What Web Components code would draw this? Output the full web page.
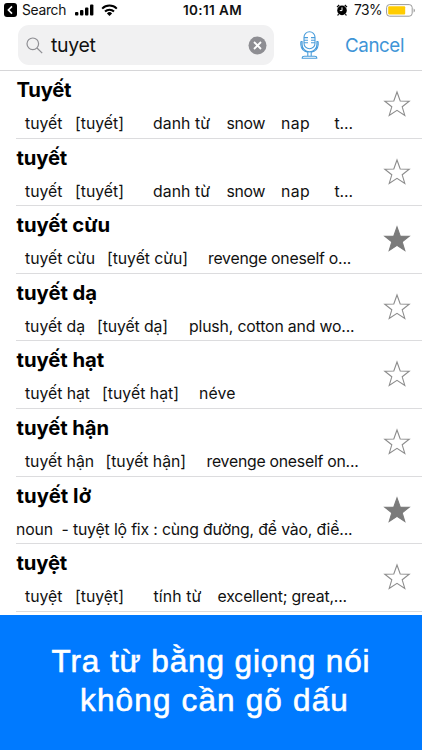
<!DOCTYPE html>
<html lang="vi">
<head>
<meta charset="UTF-8">
<meta name="viewport" content="width=device-width, initial-scale=1">
<title>Từ điển</title>
<style>
  body {
    margin: 0;
    background: white;
    color: #111;
    font-family: Inter, "Noto Sans", sans-serif;
  }
</style>
</head>
<body>
<dictionary-app></dictionary-app>
<script>
// One run of text, tracked so that it takes up the given width
class FitText extends HTMLElement {
  constructor() {
    super();
    this.attachShadow({ mode: 'open' });
    this.shadowRoot.innerHTML = `
      <style>
        :host { display: block; flex: none; }
        span { display: inline-block; white-space: pre; }
      </style>
      <span><slot></slot></span>
    `;
  }

  connectedCallback() {
    const width = Number(this.getAttribute('width'));
    const span = this.shadowRoot.querySelector('span');
    const natural = span.getBoundingClientRect().width;
    const spacing = (width - natural) / this.textContent.length;
    span.style.letterSpacing = `${spacing.toFixed(3)}px`;
    this.style.width = `${width}px`;
  }
}

class StatusBar extends HTMLElement {
  constructor() {
    super();
    this.attachShadow({ mode: 'open' });
    this.shadowRoot.innerHTML = `
      <style>
        :host {
          display: grid;
          grid-template-columns: 183px 60px 1fr;
          height: 20px;
          line-height: 20px;
          font-size: 13.8px;
          color: #111;
        }
        div { display: flex; align-items: center; }
        svg { display: block; flex: none; }
        .left { padding-left: 4px; }
        .left fit-text { margin: 0 9px 0 5px; }
        .time { font-weight: 600; font-size: 13.5px; }
        .right { padding-left: 93px; }
        .right fit-text { margin: 0 4px 0 6px; }
      </style>
      <div class="left">
        <svg width="13" height="14" viewBox="0 0 13 14">
          <rect width="13" height="14" rx="3" fill="#000"/>
          <path d="M8 3.4 4.4 7 8 10.6" fill="none" stroke="#fff" stroke-width="1.6"/>
        </svg>
        <fit-text width="44">Search</fit-text>
        <svg width="19" height="12" viewBox="0 0 19 12">
          <rect x="0" y="8" width="3.4" height="3.6" rx="1"/>
          <rect x="5" y="6" width="3.4" height="5.6" rx="1"/>
          <rect x="10" y="3.6" width="3.4" height="8" rx="1"/>
          <rect x="15" y="0.4" width="3.4" height="11.2" rx="1"/>
        </svg>
        <svg width="17" height="12" viewBox="0 0 17 12" style="margin-left:7px">
          <g fill="none" stroke="#000" stroke-width="2">
            <path d="M1.2 4.6a10.4 10.4 0 0 1 14.6 0"/>
            <path d="M4 7.5a6.4 6.4 0 0 1 9 0"/>
          </g>
          <path d="M8.5 12 5.9 9.4a3.7 3.7 0 0 1 5.2 0z"/>
        </svg>
      </div>
      <div class="time"><fit-text width="59">10:11 AM</fit-text></div>
      <div class="right">
        <svg width="12" height="12" viewBox="0 0 12 12">
          <circle cx="6" cy="6.4" r="4.8"/>
          <path d="M1 3.2 3.2 1M11 3.2 8.8 1M2.6 10.2l-1 1.3M9.4 10.2l1 1.3" stroke="#000" stroke-width="1.2"/>
          <path d="M6 3.4v3.2H3.8" fill="none" stroke="#fff" stroke-width="1"/>
        </svg>
        <fit-text width="28">73%</fit-text>
        <svg width="30" height="13" viewBox="0 0 30 13">
          <rect x=".6" y=".6" width="25.6" height="11.6" rx="3" fill="#fff" stroke="#999" stroke-width="1"/>
          <rect x="2.2" y="2.2" width="17" height="8.4" rx="1" fill="#fc0"/>
          <path d="M27.6 4.4a2.2 2.2 0 0 1 0 4z" fill="#999"/>
        </svg>
      </div>
    `;
  }
}

class SearchHeader extends HTMLElement {
  constructor() {
    super();
    this.attachShadow({ mode: 'open' });
    this.shadowRoot.innerHTML = `
      <style>
        :host {
          display: flex;
          align-items: center;
          box-sizing: border-box;
          height: 51px;
          border-bottom: 1px solid #d6d6d8;
          padding-left: 18px;
        }
        svg { display: block; flex: none; }
        .field {
          display: flex;
          align-items: center;
          box-sizing: border-box;
          width: 256px;
          height: 40px;
          padding: 0 7px 0 8px;
          border-radius: 11px;
          background: #f1f1f2;
          font-size: 19.5px;
        }
        .field fit-text { margin: 0 auto 0 8px; }
        .mic { margin: 0 26px 0 26px; }
        .cancel { color: #3f95d7; font-size: 18.8px; }
      </style>
      <div class="field">
        <svg width="17" height="17" viewBox="0 0 17 17" fill="none" stroke="#8e8e93" stroke-width="1.2">
          <circle cx="6.8" cy="6.8" r="5.8"/>
          <path d="M11 11l5.2 5.2"/>
        </svg>
        <fit-text width="44.5">${this.getAttribute('query')}</fit-text>
        <svg width="19" height="19" viewBox="0 0 19 19">
          <circle cx="9.5" cy="9.5" r="9" fill="#8e8e93"/>
          <path d="M6 6l7 7M13 6l-7 7" stroke="#fff" stroke-width="1.8"/>
        </svg>
      </div>
      <svg class="mic" width="19" height="28" viewBox="0 0 19 28" fill="none" stroke="#4a9ddb" stroke-width="1.1">
        <rect x="4" y=".8" width="11" height="17" rx="5.5"/>
        <path d="M4 6.6h4M4 9.2h4M4 11.8h4M15 6.6h-4M15 9.2h-4M15 11.8h-4"/>
        <path d="M2.1 10.5v3a7.4 7.4 0 0 0 14.8 0v-3M.8 10.5h1.8M16.4 10.5h1.8M.8 10.5v3.2a8.6 8.6 0 0 0 7 7.6v4M18.2 10.5v3.2a8.6 8.6 0 0 1-7 7.6v4M2.2 27.2c0-1.4 1-1.9 2.2-1.9h10.2c1.2 0 2.2.5 2.2 1.9z"/>
      </svg>
      <fit-text class="cancel" width="59">Cancel</fit-text>
    `;
  }
}

class StarButton extends HTMLElement {
  constructor() {
    super();
    this.attachShadow({ mode: 'open' });
    this.shadowRoot.innerHTML = `
      <style>
        :host { display: block; width: 28px; height: 27px; }
        svg { display: block; }
        path { fill: none; stroke: #8c8c8c; stroke-width: 1.1; }
        :host([filled]) path { fill: #7b7b7b; stroke: #7b7b7b; }
      </style>
      <svg width="28" height="27" viewBox="0 0 28 27">
        <path d="M14 2l3.2 9 9 .2-7 5.6 2.6 8.6-7.8-5-7.8 5 2.6-8.6-7-5.6 9-.2z"/>
      </svg>
    `;
  }
}

class WordRow extends HTMLElement {
  constructor() {
    super();
    this.attachShadow({ mode: 'open' });
    this.shadowRoot.innerHTML = `
      <style>
        :host {
          display: flex;
          justify-content: space-between;
          box-sizing: border-box;
          height: 67.6px;
          margin-left: 16px;
          padding-right: 11px;
          border-bottom: 1px solid #dcdcde;
        }
        .title {
          height: 38px;
          padding-left: 0.6px;
          line-height: 38px;
          color: #000;
          font-size: 20.3px;
          font-weight: 700;
        }
        .meaning {
          display: flex;
          height: 28px;
          line-height: 30px;
          font-size: 15.8px;
        }
        star-button { flex: none; margin-top: 19px; }
      </style>
      <div>
        <div class="title"></div>
        <div class="meaning"></div>
      </div>
      <star-button></star-button>
    `;
  }

  set word(word) {
    const root = this.shadowRoot;
    const [title, width] = word.title;
    root.querySelector('.title').innerHTML = `<fit-text width="${width}">${title}</fit-text>`;

    let x = 16;
    root.querySelector('.meaning').innerHTML = word.parts.map(([text, start, end]) => {
      const gap = start - x;
      x = end;
      return `<fit-text width="${end - start}" style="margin-left:${gap}px">${text}</fit-text>`;
    }).join('');

    root.querySelector('star-button').toggleAttribute('filled', Boolean(word.saved));
  }
}

class PromoBanner extends HTMLElement {
  constructor() {
    super();
    this.attachShadow({ mode: 'open' });
    this.shadowRoot.innerHTML = `
      <style>
        :host {
          display: flex;
          flex-direction: column;
          align-items: center;
          box-sizing: border-box;
          height: 135.4px;
          padding-top: 27.4px;
          background: #007aff;
          color: white;
          font: 31.5px/39px "Liberation Sans", Arial, sans-serif;
          -webkit-text-stroke: 0.6px white;
        }
        .second { margin-left: 7px; }
      </style>
      <fit-text width="319">Tra từ bằng giọng nói</fit-text>
      <fit-text class="second" width="269">không cần gõ dấu</fit-text>
    `;
  }
}

// title: [text, width], parts: [text, start, end]
const words = [
  { title: ['Tuyết', 54.5], parts: [['tuyết', 25, 62.5], ['[tuyết]', 75, 124], ['danh từ', 153, 210], ['snow', 226.5, 265], ['nap', 281, 310], ['t...', 334.5, 353]] },
  { title: ['tuyết', 50.5], parts: [['tuyết', 25, 62.5], ['[tuyết]', 75, 124], ['danh từ', 153, 210], ['snow', 226.5, 265], ['nap', 281, 310], ['t...', 334.5, 353]] },
  { title: ['tuyết cừu', 93.5], saved: true, parts: [['tuyết cừu', 25, 95], ['[tuyết cừu]', 107, 188], ['revenge oneself o...', 208, 351]] },
  { title: ['tuyết dạ', 80.5], parts: [['tuyết dạ', 25, 85], ['[tuyết dạ]', 97, 168], ['plush, cotton and wo...', 189, 354.5]] },
  { title: ['tuyết hạt', 87.5], parts: [['tuyết hạt', 25, 90], ['[tuyết hạt]', 102, 179], ['néve', 199, 235.5]] },
  { title: ['tuyết hận', 92.5], parts: [['tuyết hận', 25, 94], ['[tuyết hận]', 105.5, 186], ['revenge oneself on...', 206.5, 358.5]] },
  { title: ['tuyết lở', 74.5], saved: true, parts: [['noun', 16, 53], ['- tuyệt lộ fix : cùng đường, để vào, điề...', 61.5, 352.5]] },
  { title: ['tuyệt', 50.5], parts: [['tuyệt', 25, 62.5], ['[tuyệt]', 75, 124], ['tính từ', 153.5, 201.5], ['excellent; great,...', 217.5, 347]] },
];

class DictionaryApp extends HTMLElement {
  constructor() {
    super();
    this.attachShadow({ mode: 'open' });
    this.shadowRoot.innerHTML = `
      <style>
        :host {
          display: flex;
          flex-direction: column;
          width: 422px;
          height: 750px;
          overflow: hidden;
        }
        main { flex: 1; }
      </style>
      <status-bar></status-bar>
      <search-header query="tuyet"></search-header>
      <main></main>
      <promo-banner></promo-banner>
    `;
  }

  connectedCallback() {
    const main = this.shadowRoot.querySelector('main');
    words.forEach((word) => {
      const row = document.createElement('word-row');
      main.appendChild(row);
      row.word = word;
    });
  }
}

customElements.define('fit-text', FitText);
customElements.define('status-bar', StatusBar);
customElements.define('search-header', SearchHeader);
customElements.define('star-button', StarButton);
customElements.define('word-row', WordRow);
customElements.define('promo-banner', PromoBanner);
customElements.define('dictionary-app', DictionaryApp);
</script>
</body>
</html>
